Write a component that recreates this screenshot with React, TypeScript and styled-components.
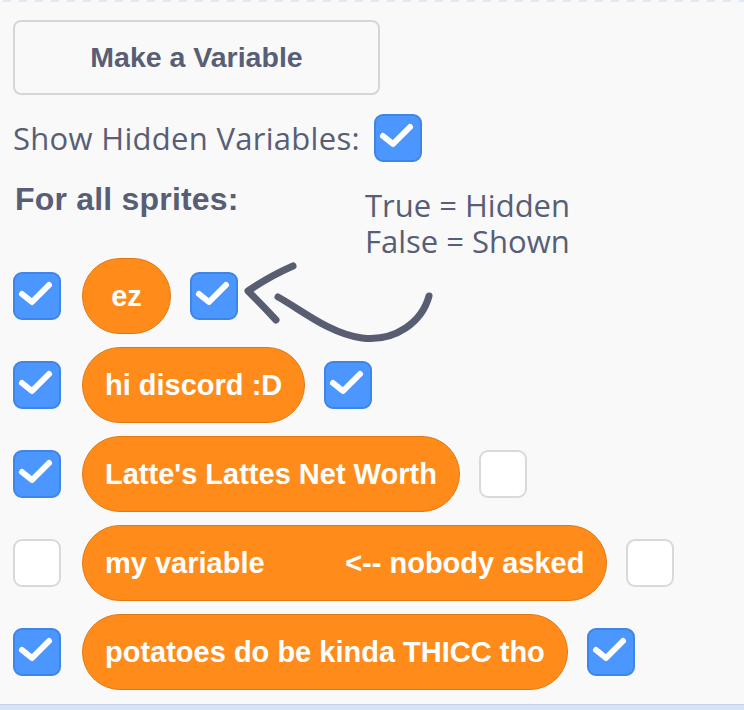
import React from "react";
import styled, { createGlobalStyle } from "styled-components";

const GlobalStyle = createGlobalStyle`
  html, body { margin: 0; padding: 0; background: #f9f9f9; }
  #root { width: 744px; height: 710px; }
`;

const Page = styled.div`
  position: relative;
  width: 744px;
  height: 710px;
  background: #f9f9f9;
  display: flex;
  flex-direction: column;
  overflow: hidden;
`;

const TopEdge = styled.div`
  height: 2px;
  flex: none;
  background: repeating-linear-gradient(90deg, #f9f9f9 0 3px, #e0eaf6 3px 11px, #f9f9f9 11px 16px);
`;

const Content = styled.div`
  flex: 1;
  display: flex;
  flex-direction: column;
  padding-left: 13px;
`;

const MakeButton = styled.div`
  margin-top: 18px;
  width: 367px;
  height: 75px;
  box-sizing: border-box;
  border: 2px solid #d6d6d6;
  border-radius: 8px;
  display: flex;
  align-items: center;
  justify-content: center;
  font-family: "Liberation Sans", Arial, sans-serif;
  font-weight: 700;
  font-size: 28.5px;
  color: #575e75;
`;

const ShowRow = styled.div`
  margin-top: 19px;
  height: 48px;
  display: flex;
  align-items: center;
  gap: 14px;
`;

const ShowLabel = styled.span`
  font-family: "Open Sans", "Noto Sans", sans-serif;
  font-size: 31px;
  letter-spacing: 0.3px;
  color: #575e75;
  line-height: 48px;
`;

const Heading = styled.div`
  margin-top: 17px;
  margin-left: 2px;
  height: 40px;
  line-height: 40px;
  font-family: "Liberation Sans", Arial, sans-serif;
  font-weight: 700;
  font-size: 32px;
  letter-spacing: 0.2px;
  color: #575e75;
`;

const List = styled.div`
  margin-top: 39px;
  display: flex;
  flex-direction: column;
  gap: 13px;
`;

const Row = styled.div`
  height: 76px;
  display: flex;
  align-items: center;
`;

const Box = styled.div<{ $checked: boolean }>`
  flex: none;
  width: 48px;
  height: 48px;
  box-sizing: border-box;
  border-radius: 9px;
  border: 2px solid ${(p) => (p.$checked ? "#3d85e6" : "#d9d9d9")};
  background: ${(p) => (p.$checked ? "#4c97ff" : "#ffffff")};
  display: flex;
  align-items: center;
  justify-content: center;
`;

const Pill = styled.div`
  flex: none;
  height: 76px;
  min-width: 89px;
  box-sizing: border-box;
  margin: 0 19px 0 21px;
  padding: 0 22px;
  border-radius: 38px;
  border: 1.5px solid #e07812;
  background: #ff8c1a;
  color: #ffffff;
  display: flex;
  align-items: center;
  justify-content: center;
  font-family: "Liberation Sans", Arial, sans-serif;
  font-weight: 700;
  font-size: 29px;
  white-space: pre;
`;

const BottomEdge = styled.div`
  flex: none;
  height: 5px;
  border-top: 1px solid #c3d3ee;
  background: #d7e2f3;
`;

const Note = styled.div`
  position: absolute;
  left: 365px;
  top: 190px;
  display: flex;
  flex-direction: column;
  font-family: "Open Sans", "Noto Sans", sans-serif;
  font-size: 31px;
  color: #575e75;
`;

const NoteLine = styled.div`
  height: 36px;
  line-height: 30px;
`;

const ArrowLayer = styled.svg`
  position: absolute;
  left: 0;
  top: 0;
  pointer-events: none;
`;

const Check = ({ on }: { on: boolean }) => (
  <Box $checked={on}>
    {on && (
      <svg width="48" height="48" viewBox="0 0 48 48" style={{ marginLeft: -4, marginTop: -4 }}>
        <polyline
          points="11,24 21,32 38,15"
          fill="none"
          stroke="#ffffff"
          strokeWidth="6"
          strokeLinecap="round"
          strokeLinejoin="round"
        />
      </svg>
    )}
  </Box>
);

const vars: { name: string; shown: boolean; hidden: boolean }[] = [
  { name: "ez", shown: true, hidden: true },
  { name: "hi discord :D", shown: true, hidden: true },
  { name: "Latte's Lattes Net Worth", shown: true, hidden: false },
  { name: "my variable          <-- nobody asked", shown: false, hidden: false },
  { name: "potatoes do be kinda THICC tho", shown: true, hidden: true },
];

export default function App() {
  return (
    <Page>
      <GlobalStyle />
      <TopEdge />
      <Content>
        <MakeButton>Make a Variable</MakeButton>
        <ShowRow>
          <ShowLabel>Show Hidden Variables:</ShowLabel>
          <Check on={true} />
        </ShowRow>
        <Heading>For all sprites:</Heading>
        <List>
          {vars.map((v) => (
            <Row key={v.name}>
              <Check on={v.shown} />
              <Pill>{v.name}</Pill>
              <Check on={v.hidden} />
            </Row>
          ))}
        </List>
      </Content>
      <BottomEdge />
      <Note>
        <NoteLine>True = Hidden</NoteLine>
        <NoteLine>False = Shown</NoteLine>
      </Note>
      <ArrowLayer width="744" height="710" viewBox="0 0 744 710">
        <path
          d="M293 266 Q270 276 248 291 Q262 305 276 320"
          fill="none"
          stroke="#585d72"
          strokeWidth="7"
          strokeLinecap="round"
          strokeLinejoin="round"
        />
        <path
          d="M278 297 C300 309 330 334 362 338 C395 342 422 322 429 296"
          fill="none"
          stroke="#585d72"
          strokeWidth="7"
          strokeLinecap="round"
          strokeLinejoin="round"
        />
      </ArrowLayer>
    </Page>
  );
}
